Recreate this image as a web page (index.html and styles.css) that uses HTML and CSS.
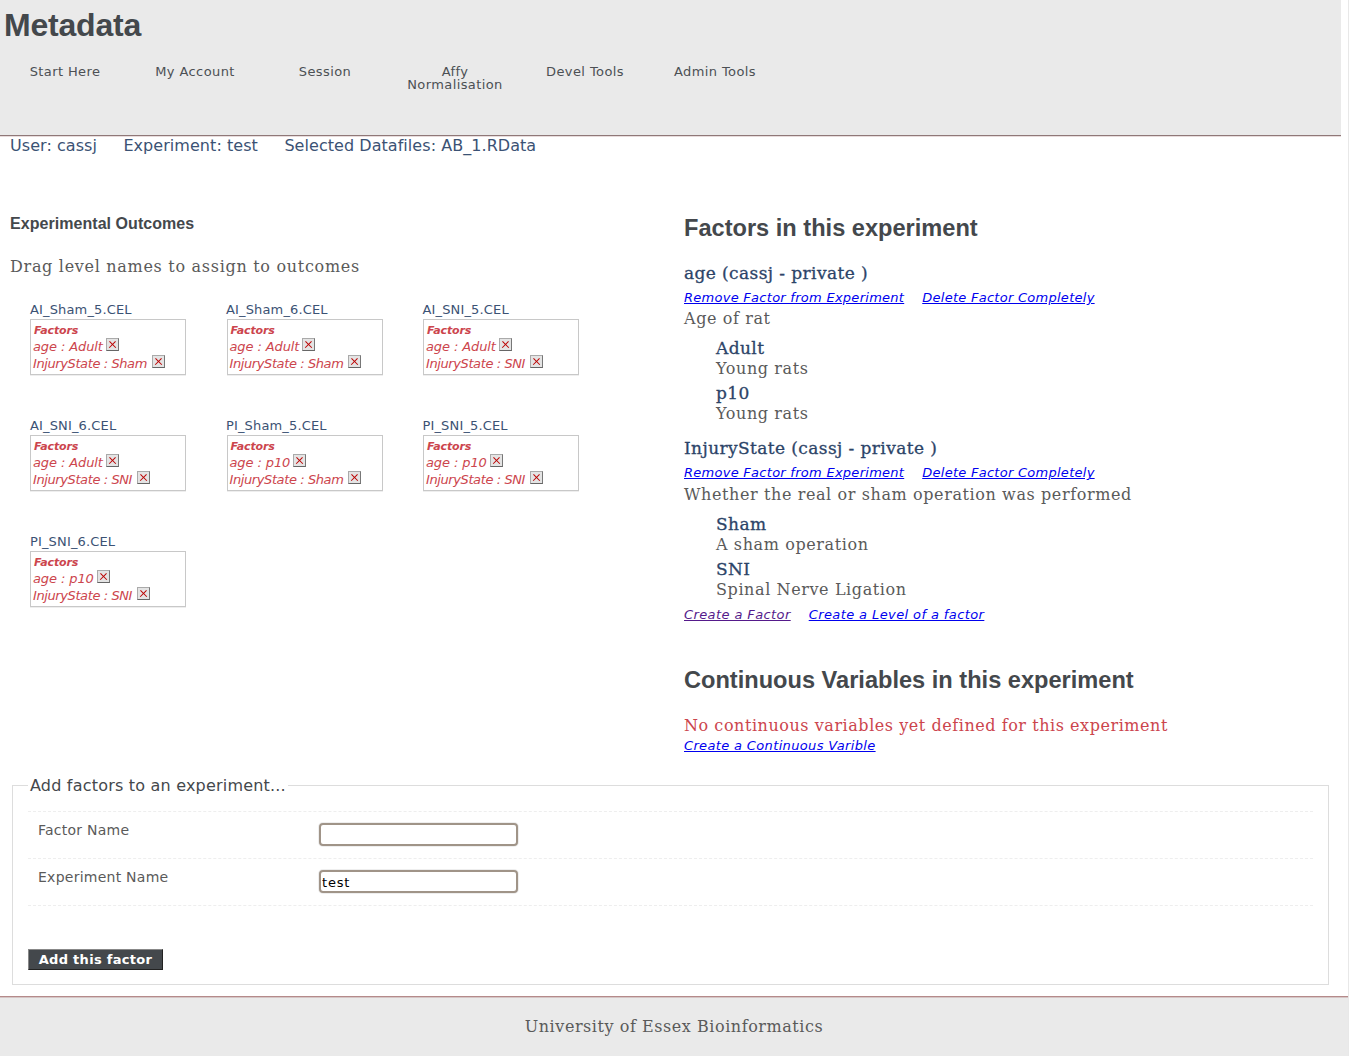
FILE: index.html
```html
<!DOCTYPE html>
<html lang="en">
<head>
<meta charset="utf-8">
<title>Metadata</title>
<link rel="stylesheet" href="styles.css">
</head>
<body>
<header class="top">
  <h1>Metadata</h1>
  <nav class="nav">
    <a>Start Here</a><a>My Account</a><a>Session</a><a>Affy<br>Normalisation</a><a>Devel Tools</a><a>Admin Tools</a>
  </nav>
</header>
<div class="status"><span>User: cassj</span><span>Experiment: test</span><span>Selected Datafiles: AB_1.RData</span></div>
<main class="columns">
  <section class="left">
    <h3>Experimental Outcomes</h3>
    <p class="lead">Drag level names to assign to outcomes</p>
    <div class="grid">
      <div class="outcome"><div class="name">AI_Sham_5.CEL</div><div class="box"><b>Factors</b><div class="f1">age : Adult <i class="x"></i></div><div class="f2">InjuryState : Sham <i class="x"></i></div></div></div>
      <div class="outcome"><div class="name">AI_Sham_6.CEL</div><div class="box"><b>Factors</b><div class="f1">age : Adult <i class="x"></i></div><div class="f2">InjuryState : Sham <i class="x"></i></div></div></div>
      <div class="outcome"><div class="name">AI_SNI_5.CEL</div><div class="box"><b>Factors</b><div class="f1">age : Adult <i class="x"></i></div><div class="f2">InjuryState : SNI <i class="x"></i></div></div></div>
      <div class="outcome"><div class="name">AI_SNI_6.CEL</div><div class="box"><b>Factors</b><div class="f1">age : Adult <i class="x"></i></div><div class="f2">InjuryState : SNI <i class="x"></i></div></div></div>
      <div class="outcome"><div class="name">PI_Sham_5.CEL</div><div class="box"><b>Factors</b><div class="f1">age : p10 <i class="x"></i></div><div class="f2">InjuryState : Sham <i class="x"></i></div></div></div>
      <div class="outcome"><div class="name">PI_SNI_5.CEL</div><div class="box"><b>Factors</b><div class="f1">age : p10 <i class="x"></i></div><div class="f2">InjuryState : SNI <i class="x"></i></div></div></div>
      <div class="outcome"><div class="name">PI_SNI_6.CEL</div><div class="box"><b>Factors</b><div class="f1">age : p10 <i class="x"></i></div><div class="f2">InjuryState : SNI <i class="x"></i></div></div></div>
    </div>
  </section>
  <section class="right">
    <h2>Factors in this experiment</h2>
    <h4>age (cassj - private )</h4>
    <div class="links"><a href="#">Remove Factor from Experiment</a><a href="#">Delete Factor Completely</a></div>
    <p class="desc">Age of rat</p>
    <div class="levels">
      <h5>Adult</h5><p class="desc">Young rats</p>
      <h5>p10</h5><p class="desc">Young rats</p>
    </div>
    <h4 class="next">InjuryState (cassj - private )</h4>
    <div class="links"><a href="#">Remove Factor from Experiment</a><a href="#">Delete Factor Completely</a></div>
    <p class="desc">Whether the real or sham operation was performed</p>
    <div class="levels">
      <h5>Sham</h5><p class="desc">A sham operation</p>
      <h5>SNI</h5><p class="desc">Spinal Nerve Ligation</p>
    </div>
    <div class="links create"><a href="#" class="visited">Create a Factor</a><a href="#">Create a Level of a factor</a></div>
    <h2 class="cont">Continuous Variables in this experiment</h2>
    <p class="warn">No continuous variables yet defined for this experiment</p>
    <div class="links one"><a href="#">Create a Continuous Varible</a></div>
  </section>
</main>
<form class="form">
  <fieldset>
    <legend>Add factors to an experiment...</legend>
    <div class="row"><label>Factor Name</label><input type="text"></div>
    <div class="row"><label>Experiment Name</label><input type="text" value="test"></div>
    <button type="button">Add this factor</button>
  </fieldset>
</form>
<footer class="foot">University of Essex Bioinformatics</footer>
</body>
</html>
```
FILE: styles.css
```css
html, body { margin: 0; padding: 0; background: #fff; }
body { width: 1349px; height: 1056px; box-sizing: border-box; border-right: 1px solid #e8e8e8; overflow: hidden; font-family: "DejaVu Serif", serif; color: #444; }
.top { width: 1341px; height: 136px; box-sizing: border-box; background: #eaeaea; border-bottom: 1px solid #8f7878; box-shadow: 0 1px 0 #e8dcdc; }
h1 { margin: 0; padding: 6px 0 0 4px; font: bold 32px/38px "Liberation Sans", sans-serif; letter-spacing: -.2px; color: #44484c; }
.nav { display: flex; margin-top: 21px; }
.nav a { width: 130px; text-align: center; font: 13px/13px "DejaVu Sans", sans-serif; letter-spacing: .4px; color: #4c5054; }
.status { display: flex; gap: 26.5px; padding-left: 10px; height: 19px; font: 16px/19px "DejaVu Sans", sans-serif; letter-spacing: .05px; color: #3b5274; }
.columns { display: flex; height: 619px; }
.left { width: 674px; padding: 59px 0 0 10px; box-sizing: border-box; }
h3 { margin: 0; font: bold 16px/20px "Liberation Sans", sans-serif; color: #44484c; letter-spacing: .05px; }
.lead { margin: 23px 0 0; font: 16px/20px "DejaVu Serif", serif; letter-spacing: .7px; color: #5a5a5a; }
.grid { display: grid; grid-template-columns: repeat(3, 196.5px); grid-auto-rows: 116px; margin: 24px 0 0 20px; }
.name { font: 13px/17px "DejaVu Sans", sans-serif; letter-spacing: .15px; color: #3b5274; }
.outcome:not(:nth-child(3n+1)) .name { margin-left: -.5px; }
.box { width: 156px; height: 56px; margin-top: 1px; box-sizing: border-box; border: 1px solid #c8c8c8; box-shadow: 0 1px 0 #eee; padding: 4px 2px 0; font: italic 13px/17px "DejaVu Sans", sans-serif; color: #cc454d; }
.box b { display: block; margin-bottom: 1px; padding-left: 1px; font: italic bold 11px/13px "DejaVu Sans", sans-serif; letter-spacing: -.1px; }
.f1 { letter-spacing: -.1px; }
.f2 { letter-spacing: -.4px; }
.x { display: inline-block; position: relative; width: 11px; height: 11px; border: 1px solid #aaa; border-right-color: #777; border-bottom-color: #666; background: #e4e4e4; vertical-align: 0; margin-left: 1px; }
.f1 .x { margin-left: -1px; }
.x::before, .x::after { content: ""; position: absolute; left: 1px; top: 4.8px; width: 9px; height: 1.4px; background: #b00; }
.x::before { transform: rotate(45deg); }
.x::after { transform: rotate(-45deg); }
.right { width: 660px; padding-top: 59px; margin-left: 10px; }
h2 { margin: 0; font: bold 23.6px/28px "Liberation Sans", sans-serif; color: #44484c; }
h4 { margin: 20px 0 0; font: 17px/22px "DejaVu Serif", serif; letter-spacing: .4px; -webkit-text-stroke: .3px #2c4468; color: #2c4468; }
h4.next { margin-top: 13.4px; }
h5 { margin: 0 0 1px; font: 17px/20px "DejaVu Serif", serif; letter-spacing: .4px; -webkit-text-stroke: .3px #2c4468; color: #2c4468; }
.links { display: flex; gap: 18px; margin-top: 5px; margin-bottom: 3px; font: italic 13px/17px "DejaVu Sans", sans-serif; letter-spacing: .27px; }
h4.next + .links { margin-top: 5.6px; margin-bottom: 4px; }
.links a { color: #00e; }
.links a.visited { color: #551a8b; }
.desc { margin: 0; font: 16px/20px "DejaVu Serif", serif; letter-spacing: .6px; color: #5a5a5a; }
.levels { padding: 9px 0 0 32px; }
.levels .desc { margin-bottom: 3.5px; }
.create { margin-top: 6.5px; margin-bottom: 0; letter-spacing: .4px; }
.cont { margin-top: 43px; }
.warn { margin: 21px 0 0; font: 16px/22px "DejaVu Serif", serif; letter-spacing: .55px; color: #cc454d; }
.one { margin-top: 0; letter-spacing: .35px; }
.form { margin: 0; padding: 0 0 0 12px; width: 1329px; box-sizing: border-box; }
fieldset { margin: 0; padding: 15px 15px 16px; height: 211px; box-sizing: border-box; border: 1px solid #ddd; }
legend { padding: 2px 2px 0; font: 16px/20px "DejaVu Sans", sans-serif; letter-spacing: .2px; color: #44484c; }
.row { display: flex; height: 46px; border-top: 1px dashed #eee; }
.row + .row { border-bottom: 1px dashed #eee; }
.row label { width: 291px; padding: 8px 0 0 10px; box-sizing: border-box; font: 14px/20px "DejaVu Sans", sans-serif; letter-spacing: .25px; color: #5a5a5a; }
.row input { width: 199px; height: 23px; margin-top: 11px; padding: 1px 1px 0; box-sizing: border-box; border: 2px solid #a09488; border-radius: 4px; box-shadow: 0 0 0 1px #eee; outline: 0; font: 13px "DejaVu Sans", sans-serif; letter-spacing: .8px; background: #fff; }
fieldset button { display: block; margin-top: 43px; width: 135px; height: 21px; padding: 0; border: 1px solid; border-color: #888 #222 #222 #888; background: #44484c; color: #fff; font: bold 13px/18px "DejaVu Sans", sans-serif; letter-spacing: .3px; }
.foot { margin-top: 11px; height: 60px; box-sizing: border-box; background: #eaeaea; border-top: 1px solid #b58a8a; box-shadow: inset 0 1px 0 #d5c6c6; text-align: center; padding-top: 20px; font: 16px/20px "DejaVu Serif", serif; letter-spacing: .55px; color: #5a5a5a; }
```
